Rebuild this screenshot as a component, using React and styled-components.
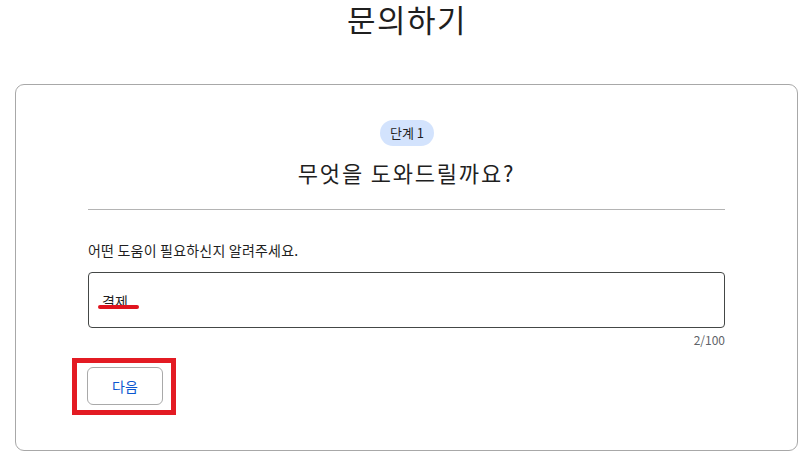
import React from "react";
import styled, { createGlobalStyle } from "styled-components";

const Global = createGlobalStyle`
  html, body { margin: 0; padding: 0; background: #fff; }
  body { font-family: "Noto Sans CJK KR", "Noto Sans", sans-serif; color: #1f1f1f; }
`;

const Page = styled.div`
  width: 811px;
  height: 456px;
  overflow: hidden;
  display: flex;
  flex-direction: column;
  align-items: stretch;
`;

const Title = styled.h1`
  margin: 0;
  padding: 0 0 0 3px;
  font-size: 31px;
  line-height: 38px;
  font-weight: 400;
  letter-spacing: 1.5px;
  text-align: center;
  color: #1f1f1f;
`;

const Card = styled.section`
  margin: 46px 13px 0 15px;
  height: 367px;
  box-sizing: border-box;
  border: 1px solid #a8a8a8;
  border-radius: 9px;
  padding: 35px 72px 0 72px;
  display: flex;
  flex-direction: column;
`;

const Header = styled.div`
  display: flex;
  flex-direction: column;
  align-items: center;
`;

const Badge = styled.span`
  height: 26px;
  padding: 0 10px;
  border-radius: 13px;
  background: #d3e3fd;
  color: #1f1f1f;
  font-size: 13px;
  line-height: 26px;
  margin-left: 1px;
`;

const Heading = styled.h2`
  margin: 10px 0 0 0;
  font-size: 22px;
  line-height: 32px;
  font-weight: 400;
  letter-spacing: 1.8px;
  color: #1f1f1f;
`;

const Divider = styled.hr`
  border: 0;
  border-top: 1px solid #b4b4b4;
  margin: 21px 0 0 0;
  width: 100%;
`;

const Label = styled.label`
  margin-top: 30px;
  font-size: 14px;
  line-height: 20px;
  letter-spacing: 0.2px;
  color: #1f1f1f;
`;

const InputWrap = styled.div`
  position: relative;
  margin-top: 12px;
`;

const Input = styled.div`
  height: 56px;
  box-sizing: border-box;
  border: 1px solid #444746;
  border-radius: 4px;
  padding: 0 13px;
  display: flex;
  align-items: center;
  font-size: 14px;
  color: #1f1f1f;
  padding-top: 2px;
`;

const Underline = styled.span`
  position: absolute;
  left: 10px;
  top: 33px;
  width: 41px;
  height: 4px;
  border-radius: 2px;
  background: #e0141e;
`;

const Counter = styled.div`
  margin-top: 4px;
  text-align: right;
  font-size: 12px;
  line-height: 16px;
  color: #5f6368;
`;

const ButtonArea = styled.div`
  position: relative;
  margin-top: 19px;
  align-self: flex-start;
  margin-left: -1px;
`;

const Highlight = styled.span`
  position: absolute;
  left: -15px;
  top: -9px;
  right: -13px;
  bottom: -10px;
  border: 5px solid #e31b23;
  pointer-events: none;
`;

const Button = styled.button`
  width: 76px;
  height: 38px;
  border: 1px solid #a9a9a9;
  border-radius: 6px;
  background: #fff;
  color: #0b57d0;
  font-family: inherit;
  font-size: 14px;
  display: block;
`;

export default function App() {
  return (
    <Page>
      <Global />
      <Title>문의하기</Title>
      <Card>
        <Header>
          <Badge>단계 1</Badge>
          <Heading>무엇을 도와드릴까요?</Heading>
        </Header>
        <Divider />
        <Label>어떤 도움이 필요하신지 알려주세요.</Label>
        <InputWrap>
          <Input>결제</Input>
          <Underline />
        </InputWrap>
        <Counter>2/100</Counter>
        <ButtonArea>
          <Button>다음</Button>
          <Highlight />
        </ButtonArea>
      </Card>
    </Page>
  );
}
